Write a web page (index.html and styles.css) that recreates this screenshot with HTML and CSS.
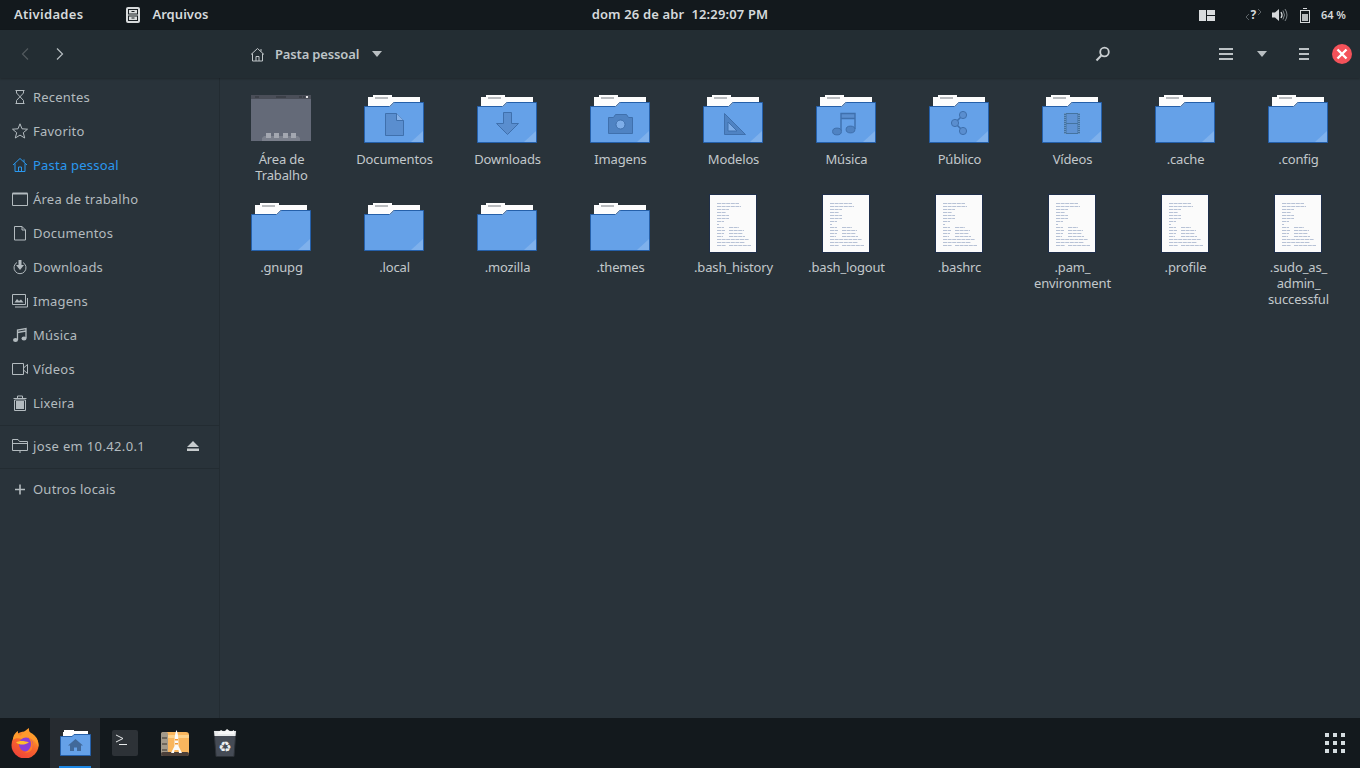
FILE: index.html
```html
<!DOCTYPE html>
<html lang="pt-BR">
<head>
<meta charset="utf-8">
<title>Arquivos</title>
<link rel="stylesheet" href="styles.css">
</head>
<body>
<svg class="defs" width="0" height="0" aria-hidden="true">
  <defs>
    <linearGradient id="fx-body" x1="0.8" y1="0" x2="0.2" y2="1">
      <stop offset="0" stop-color="#ffb02e"/>
      <stop offset=".45" stop-color="#f9672c"/>
      <stop offset="1" stop-color="#ee3f3a"/>
    </linearGradient>
    <symbol id="folder" viewBox="0 0 64 64">
      <g transform="translate(2 11)">
        <path d="M9 0H28V2H56V8H30L26 12H4V2H9Z" fill="#fdfdfd"/>
        <path d="M11 2H24V4H11Z" fill="#b9bcbf"/>
        <path d="M.5 11.500H25.500L29.500 7.500H59.500V47.500H.5Z" fill="#65a1e8" stroke="#2560aa"/>
        <path d="M59 36V47H47Z" fill="#7fb1ec"/>
        <path d="M30 7.500L26 11.500" stroke="#8a9aad" fill="none"/>
      </g>
    </symbol>
    <symbol id="em-doc" viewBox="0 0 64 64">
      <path d="M23.500 29.500H34.500L41.500 36.500V51.500H23.500Z" fill="#5a8ecf" stroke="#3f70ad"/>
      <path d="M34.500 29.500V36.500H41.500" fill="#86b2ea" stroke="#3f70ad"/>
    </symbol>
    <symbol id="em-down" viewBox="0 0 64 64">
      <path d="M28.500 28.500H36.500V39.500H43.500L32.500 50.500L21.500 39.500H28.500Z" fill="#5a8ecf" stroke="#3f70ad"/>
    </symbol>
    <symbol id="em-cam" viewBox="0 0 64 64">
      <path d="M20.500 33.500H25.500L27.500 30.500H38.500L40.500 33.500H44.500V49.500H20.500Z" fill="#4f83c3" stroke="#3f70ad"/>
      <circle cx="32.500" cy="40.500" r="4.500" fill="#7eaee9" stroke="#3f70ad"/>
    </symbol>
    <symbol id="em-tri" viewBox="0 0 64 64">
      <path d="M23.500 29.500V50.500H44.500Z" fill="#4f83c3" stroke="#3f70ad"/>
      <path d="M27 38V47H36Z" fill="#7eaee9" stroke="#3f70ad"/>
    </symbol>
    <symbol id="em-music" viewBox="0 0 64 64">
      <rect x="27" y="29.500" width="14" height="5" fill="#5a8ecf"/>
      <path d="M27 47V29.500H41V45M27 34.500H41" fill="none" stroke="#3f70ad" stroke-width="1.400"/>
      <ellipse cx="23" cy="47.500" rx="4.400" ry="3.400" fill="#4f83c3" stroke="#3f70ad"/>
      <ellipse cx="36.500" cy="45.500" rx="4.400" ry="3.400" fill="#4f83c3" stroke="#3f70ad"/>
    </symbol>
    <symbol id="em-share" viewBox="0 0 64 64">
      <path d="M36 31L28 39L36 47" fill="none" stroke="#3f70ad" stroke-width="1.500"/>
      <circle cx="36" cy="31" r="3.600" fill="#5a8ecf" stroke="#3f70ad"/>
      <circle cx="28" cy="39" r="3.600" fill="#5a8ecf" stroke="#3f70ad"/>
      <circle cx="36" cy="47" r="3.600" fill="#5a8ecf" stroke="#3f70ad"/>
    </symbol>
    <symbol id="em-film" viewBox="0 0 64 64">
      <rect x="24" y="29" width="16" height="21" fill="#44739f"/>
      <rect x="26.500" y="30" width="11" height="9" fill="#5f93d4"/>
      <rect x="26.500" y="40" width="11" height="9" fill="#5f93d4"/>
      <path d="M25 29V50M39 29V50" stroke="#88b3ea" stroke-dasharray="1 1"/>
    </symbol>
    <symbol id="desktop" viewBox="0 0 64 64">
      <g transform="translate(2 11)">
        <rect x="0" y="0" width="60" height="46" fill="#646a78"/>
        <rect x="0" y="0" width="60" height="4" fill="#4a4e58"/>
        <rect x="4" y="1.500" width="4" height="1" fill="#2f3238"/>
        <rect x="25" y="1.500" width="10" height="1" fill="#2f3238"/>
        <rect x="48" y="1.500" width="3" height="1" fill="#2f3238"/>
        <rect x="52" y="1.500" width="2" height="1" fill="#2f3238"/>
        <rect x="55" y="1" width="2" height="2" fill="#e8e8e8"/>
        <path d="M11 46V43L13 41H47L49 43V46Z" fill="#7b808c"/>
        <rect x="15" y="38" width="5" height="5" fill="#a3a7b0"/>
        <rect x="23" y="38" width="5" height="5" fill="#a3a7b0"/>
        <rect x="32" y="38" width="5" height="5" fill="#a3a7b0"/>
        <rect x="40" y="38" width="5" height="5" fill="#a3a7b0"/>
      </g>
    </symbol>
    <symbol id="doc" viewBox="0 0 64 64">
      <g transform="translate(8 2)">
        <rect x=".5" y=".5" width="47" height="58" fill="#fbfbfb" stroke="#1f2f4a"/>
        <path d="M8 9.500H30M8 12.500H32M8 15.500H20M8 18.500H17M8 21.500H20M8 24.500H20M8 27.500H15M8 30.500H10M8 33.500H15M20 33.500H30M8 36.500H16M20 36.500H35M8 39.500H15M20 39.500H34M8 42.500H14M20 42.500H36M8 45.500H40M8 48.500H36M8 51.500H17M20 51.500H42" stroke="#b7c2d6" stroke-dasharray="4 .6" fill="none"/>
      </g>
    </symbol>
  </defs>
</svg>

<div class="screen">
  <header class="topbar">
    <div class="top-left">
      <span class="top-item">Atividades</span>
      <span class="app-menu">
        <svg class="app-icon" width="14" height="16" viewBox="0 0 14 16"><rect width="14" height="16" rx="2" fill="#d7dadb"/><rect x="2.500" y="2.500" width="9" height="4.500" fill="none" stroke="#171d21"/><rect x="2.500" y="9" width="9" height="4.500" fill="none" stroke="#171d21"/><path d="M5.500 4.500H8.500M5.500 11H8.500" stroke="#171d21"/></svg>
        <span class="top-item app-name">Arquivos</span>
      </span>
    </div>
    <div class="clock">dom 26 de abr&nbsp;&nbsp;12:29:07 PM</div>
    <div class="top-right">
      <svg class="tray-layout" width="16" height="11" viewBox="0 0 16 11"><path d="M0 0H7V11H0ZM8 0H16V5H8ZM8 6H16V11H8Z" fill="#d9dcde"/></svg>
      <svg class="tray-net" width="17" height="16" viewBox="0 0 17 16"><path d="M1 10L4 7M1 10L4 13M16 5L13 2M16 5L13 8" stroke="#5b6266" fill="none"/><text x="8.500" y="12" text-anchor="middle" class="tray-q">?</text></svg>
      <svg class="tray-vol" width="16" height="14" viewBox="0 0 16 14"><path d="M0 4.500H3L7 1V13L3 9.500H0Z" fill="#d5d8da"/><path d="M9 4Q11 7 9 10" stroke="#d5d8da" fill="none" stroke-width="1.300"/><path d="M11 2.500Q14 7 11 11.500M13 1Q17 7 13 13" stroke="#7d8488" fill="none"/></svg>
      <svg class="tray-bat" width="10" height="15" viewBox="0 0 10 15"><path d="M3 .5H7" stroke="#d5d8da"/><rect x=".5" y="2.500" width="9" height="12" fill="none" stroke="#d5d8da"/><rect x="2" y="6" width="6" height="7" fill="#b6babc"/></svg>
      <span class="battery">64 %</span>
    </div>
  </header>

  <div class="toolbar">
    <div class="nav-btn"><svg width="10" height="12" viewBox="0 0 10 12"><path d="M8 .5L2.500 6L8 11.500" fill="none" stroke="#52595e" stroke-width="1.200"/></svg></div>
    <div class="nav-btn"><svg width="10" height="12" viewBox="0 0 10 12"><path d="M2 .5L7.500 6L2 11.500" fill="none" stroke="#b6bdc1" stroke-width="1.200"/></svg></div>
    <div class="crumb">
      <svg width="15" height="15" viewBox="0 0 15 15"><path d="M1 7.500L7.500 1.500L14 7.500M2.500 6.500V14H12.500V6.500M6 14V9.500H9V14M11 2V4.500" fill="none" stroke="#c0c6c9"/></svg>
      <span class="crumb-label">Pasta pessoal</span>
      <span class="arrow-down crumb-arrow"></span>
    </div>
    <svg class="search" width="16" height="16" viewBox="0 0 16 16"><circle cx="9.500" cy="6" r="4.300" fill="none" stroke="#c8cdd0" stroke-width="1.800"/><path d="M6.300 9.500L1.500 14.500" stroke="#c8cdd0" stroke-width="2"/></svg>
    <div class="bars bars-wide"><i></i><i></i><i></i></div>
    <span class="arrow-down view-arrow"></span>
    <div class="bars bars-narrow"><i></i><i></i><i></i></div>
    <svg class="close" width="20" height="20" viewBox="0 0 20 20"><circle cx="10" cy="10" r="10" fill="#f4525a"/><path d="M5.500 5.500L14.500 14.500M14.500 5.500L5.500 14.500" stroke="#fff" stroke-width="2.400"/></svg>
  </div>

  <div class="body">
    <nav class="sidebar">
      <ul class="places">
        <li class="place"><svg viewBox="0 0 16 16"><path d="M3.500 1.500H12.500M3.500 14.500H12.500M4.500 1.500V4L11.500 11.500V14.500M11.500 1.500V4L4.500 11.500V14.500" fill="none"/></svg>Recentes</li>
        <li class="place"><svg viewBox="0 0 16 16"><path d="M8 .8L10 5.800L15.500 6.200L11.300 9.700L12.700 15L8 12.100L3.300 15L4.700 9.700L.5 6.200L6 5.800Z" fill="none"/></svg>Favorito</li>
        <li class="place is-active"><svg viewBox="0 0 16 16"><path d="M1 8L8 1.500L15 8M3 6.500V14.500H13V6.500M6.500 14.500V10H9.500V14.500M12 2.500V5" fill="none"/></svg>Pasta pessoal</li>
        <li class="place"><svg viewBox="0 0 16 16"><path d="M.5 2.500H15.500V14.500H.5Z" fill="none"/><path d="M.5 2.500H15.500" stroke-width="2"/></svg>Área de trabalho</li>
        <li class="place"><svg viewBox="0 0 16 16"><path d="M2.500 1.500H10L13.500 5V15H2.500ZM10 1.500V5H13.500" fill="none"/></svg>Documentos</li>
        <li class="place"><svg viewBox="0 0 16 16"><path d="M5 3.500A6 6 0 1 0 11 3.500" fill="none"/><path d="M6.500 1H9.500V6H12L8 11L4 6H6.500Z" class="solid"/></svg>Downloads</li>
        <li class="place"><svg viewBox="0 0 16 16"><path d="M.5 1.500H13.500V11.500H.5ZM15.500 5V14H3" fill="none"/><path d="M2.500 9.500L5 6L7 8L9 6.500L11.500 9.500Z" class="solid"/></svg>Imagens</li>
        <li class="place"><svg viewBox="0 0 16 16"><path d="M5.500 13V3L14 1.500V11M5.500 5.500L14 4" fill="none" stroke-width="1.300"/><ellipse cx="3.500" cy="13" rx="2.500" ry="2" class="solid"/><ellipse cx="12" cy="11.500" rx="2.500" ry="2" class="solid"/></svg>Música</li>
        <li class="place"><svg viewBox="0 0 16 16"><path d="M.5 2.500H11.500V13.500H.5ZM11.500 7L15.500 3.500V12.500L11.500 9" fill="none"/></svg>Vídeos</li>
        <li class="place"><svg viewBox="0 0 16 16"><path d="M1.500 3.500H14.500M5.500 3V1H10.500V3M2.500 5V15.500H13.500V5Z" fill="none"/><rect x="4" y="6" width="8" height="8" class="solid"/></svg>Lixeira</li>
      </ul>
      <div class="device">
        <svg viewBox="0 0 16 16"><path d="M.5 1.500H6L7.500 3.500H15.500V12.500H.5ZM.5 5.500H15.500M8 12.500V15" fill="none"/></svg>
        <span class="device-name">jose em 10.42.0.1</span>
        <svg class="eject" viewBox="0 0 12 10"><path d="M6 0L12 6H0ZM0 7.500H12V10H0Z" fill="#c7ccce"/></svg>
      </div>
      <div class="other">
        <svg viewBox="0 0 16 16"><path d="M3 8.500H13M8 3.500V13.500" fill="none" stroke-width="1.600"/></svg>Outros locais
      </div>
    </nav>

    <main class="files">
      <div class="file"><svg class="file-icon"><use href="#desktop"/></svg><span class="file-label">Área de<br>Trabalho</span></div>
      <div class="file"><svg class="file-icon"><use href="#folder"/><use href="#em-doc"/></svg><span class="file-label">Documentos</span></div>
      <div class="file"><svg class="file-icon"><use href="#folder"/><use href="#em-down"/></svg><span class="file-label">Downloads</span></div>
      <div class="file"><svg class="file-icon"><use href="#folder"/><use href="#em-cam"/></svg><span class="file-label">Imagens</span></div>
      <div class="file"><svg class="file-icon"><use href="#folder"/><use href="#em-tri"/></svg><span class="file-label">Modelos</span></div>
      <div class="file"><svg class="file-icon"><use href="#folder"/><use href="#em-music"/></svg><span class="file-label">Música</span></div>
      <div class="file"><svg class="file-icon"><use href="#folder"/><use href="#em-share"/></svg><span class="file-label">Público</span></div>
      <div class="file"><svg class="file-icon"><use href="#folder"/><use href="#em-film"/></svg><span class="file-label">Vídeos</span></div>
      <div class="file"><svg class="file-icon"><use href="#folder"/></svg><span class="file-label">.cache</span></div>
      <div class="file"><svg class="file-icon"><use href="#folder"/></svg><span class="file-label">.config</span></div>
      <div class="file"><svg class="file-icon"><use href="#folder"/></svg><span class="file-label">.gnupg</span></div>
      <div class="file"><svg class="file-icon"><use href="#folder"/></svg><span class="file-label">.local</span></div>
      <div class="file"><svg class="file-icon"><use href="#folder"/></svg><span class="file-label">.mozilla</span></div>
      <div class="file"><svg class="file-icon"><use href="#folder"/></svg><span class="file-label">.themes</span></div>
      <div class="file"><svg class="file-icon"><use href="#doc"/></svg><span class="file-label">.bash_history</span></div>
      <div class="file"><svg class="file-icon"><use href="#doc"/></svg><span class="file-label">.bash_logout</span></div>
      <div class="file"><svg class="file-icon"><use href="#doc"/></svg><span class="file-label">.bashrc</span></div>
      <div class="file"><svg class="file-icon"><use href="#doc"/></svg><span class="file-label">.pam_<br>environment</span></div>
      <div class="file"><svg class="file-icon"><use href="#doc"/></svg><span class="file-label">.profile</span></div>
      <div class="file"><svg class="file-icon"><use href="#doc"/></svg><span class="file-label">.sudo_as_<br>admin_<br>successful</span></div>
    </main>
  </div>

  <footer class="dock">
    <div class="dock-item">
      <svg width="30" height="30" viewBox="0 0 30 30">
        <circle cx="15" cy="17" r="13.500" fill="url(#fx-body)"/>
        <path d="M3 10C4 6 6 4 8 3C7.500 6 9 7.500 11 7.500C13 4 17 1.500 19 0C18.500 3 20 5 23 7C27 10 29 14 28.500 19C25 11 18 8 12 11C8.500 10 5 10 3 12Z" fill="#ff9a2c"/>
        <circle cx="16" cy="16.500" r="7" fill="#8a3fd8"/>
        <path d="M6 14.500C9 12.500 14 12.500 19 14.500C15 17 10 17.500 6 14.500Z" fill="#ffbf2f"/>
        <path d="M17 8.500C22 10.500 24.500 15.500 22 21C20.500 24 17 25 14 24.500C18 23.500 21 20 21 16C21 13 19.500 10.500 17 8.500Z" fill="#ff7b2a"/>
      </svg>
    </div>
    <div class="dock-item is-running">
      <svg width="31" height="26" viewBox="0 0 31 26">
        <path d="M4 0H14V1H28V6H3V2H4Z" fill="#fff"/>
        <path d="M.5 6.500H12L14 4.500H30.500V25.500H.5Z" fill="#65a1e8" stroke="#2560aa"/>
        <path d="M8 15.500L15.500 9L23 15.500H21V21H17V17.500H14V21H10V15.500Z" fill="#41699a"/>
      </svg>
    </div>
    <div class="dock-item">
      <svg width="26" height="26" viewBox="0 0 26 26">
        <rect width="26" height="26" rx="2" fill="#2d3237"/>
        <path d="M4 5L11 8.500L4 12" fill="none" stroke="#e8eaeb" stroke-width="1"/>
        <path d="M7 14.500H15" stroke="#e8eaeb" stroke-width="1"/>
      </svg>
    </div>
    <div class="dock-item">
      <svg width="28" height="27" viewBox="0 0 28 27">
        <rect y="2" width="28" height="24" rx="3" fill="#f9b65e"/>
        <rect y="2" width="7" height="24" rx="2" fill="#a39a8b"/>
        <path d="M1 8H6M1 14H6M1 20H6" stroke="#6d665c" stroke-width="2"/>
        <rect x="7" y="5" width="21" height="3" fill="#fdd28c"/>
        <rect y="22" width="28" height="4" rx="2" fill="#4b3f39"/>
        <path d="M15.500 0C14 3 13.500 8 13.500 16L10 23H13L13.500 20H17.500L18 23H21L17.500 16C17.500 8 17 3 15.500 0Z" fill="#fafafa"/>
        <rect x="14" y="9" width="3" height="1.500" fill="#ef9a3a"/>
        <rect x="14" y="13" width="3" height="1.500" fill="#ef9a3a"/>
      </svg>
    </div>
    <div class="dock-item">
      <svg width="24" height="28" viewBox="0 0 24 28">
        <path d="M1 2H23L21 27.500H3Z" fill="#454b55" stroke="#2b3036"/>
        <path d="M1 2H23L22.500 7H1.500Z" fill="#e9ebec"/>
        <path d="M5 4L8 1L11 3L14 0L18 3L21 1V5H5Z" fill="#f8f8f8"/>
        <text x="12" y="22.500" text-anchor="middle" class="recycle">♻</text>
      </svg>
    </div>
    <div class="apps-grid">
      <i></i><i></i><i></i><i></i><i></i><i></i><i></i><i></i><i></i>
    </div>
  </footer>
</div>
</body>
</html>
```

FILE: styles.css
```css
* { box-sizing: border-box; }
html, body { margin: 0; padding: 0; }
body {
  font-family: "Noto Sans", "Open Sans", sans-serif;
  font-size: 13px;
  background: #29333a;
  overflow: hidden;
}
.defs { position: absolute; }
.screen {
  width: 1360px;
  height: 768px;
  display: flex;
  flex-direction: column;
}

/* Top bar */
.topbar {
  height: 30px;
  flex: none;
  background: #13191d;
  color: #d6dadc;
  display: grid;
  grid-template-columns: 1fr auto 1fr;
  align-items: center;
  font-weight: 600;
  letter-spacing: .3px;
}
.top-left { display: flex; align-items: center; padding-left: 14px; }
.top-item, .clock, .battery { padding-bottom: 2px; }
.app-menu { display: flex; align-items: center; margin-left: 43px; }
.app-icon { margin-right: 12px; }
.app-name { letter-spacing: .05px; }
.clock { letter-spacing: .15px; }
.top-right {
  display: flex;
  align-items: center;
  justify-content: flex-end;
  padding-right: 14px;
}
.tray-layout { margin-right: 30px; }
.tray-net { margin-right: 10px; }
.tray-q { font-size: 12px; font-weight: 700; fill: #d5d8da; }
.tray-vol { margin-right: 12px; }
.tray-bat { margin-right: 11px; }
.battery { font-size: 11px; letter-spacing: 0; }

/* Toolbar */
.toolbar {
  height: 48px;
  flex: none;
  background: #232d33;
  box-shadow: 0 1px 2px rgba(0, 0, 0, .25);
  display: flex;
  align-items: center;
  padding: 0 8px 0 7px;
  position: relative;
}
.nav-btn { width: 35px; display: flex; justify-content: center; }
.crumb { display: flex; align-items: center; margin-left: 173px; }
.crumb-label {
  margin-left: 10px;
  font-weight: 600;
  color: #bfc5c8;
  letter-spacing: -.15px;
}
.arrow-down {
  display: block;
  width: 0;
  height: 0;
  border-left: 5.5px solid transparent;
  border-right: 5.5px solid transparent;
  border-top: 6px solid #b9bfc2;
}
.crumb-arrow { margin-left: 13px; }
.search { margin-left: auto; margin-right: 108px; }
.bars { display: flex; flex-direction: column; gap: 3px; }
.bars i { display: block; height: 2px; background: #bcc2c5; }
.bars-wide { width: 14px; margin-right: 24px; }
.view-arrow { margin-right: 32px; }
.bars-narrow { width: 10px; margin-right: 23px; }
.close { display: block; }

/* Body */
.body { flex: 1; display: flex; min-height: 0; }
.sidebar {
  width: 220px;
  flex: none;
  border-right: 1px solid #232c32;
  padding-top: 2px;
  color: #b3bbbf;
  letter-spacing: .22px;
}
.places { list-style: none; margin: 0; padding: 0 0 5px; border-bottom: 1px solid #232c32; }
.place, .device, .other {
  display: flex;
  align-items: center;
  padding-left: 12px;
}
.place { height: 34px; }
.sidebar svg {
  width: 16px;
  height: 16px;
  margin-right: 5px;
  flex: none;
  stroke: #b3bbbf;
}
.sidebar svg .solid { fill: #b3bbbf; stroke: none; }
.is-active { color: #2a98ee; }
.sidebar .is-active svg { stroke: #2a98ee; }
.device { height: 43px; border-bottom: 1px solid #232c32; padding: 0 20px 2px 12px; }
.device-name { flex: 1; letter-spacing: .35px; }
.sidebar .eject { width: 12px; height: 10px; margin: 0; stroke: none; }
.other { height: 41px; padding-bottom: 2px; }

/* Files */
.files {
  flex: 1;
  padding: 6px 0 0 4.5px;
  display: grid;
  grid-template-columns: repeat(10, 113px);
  grid-auto-rows: max-content;
  row-gap: 9px;
  align-content: start;
}
.file { display: flex; flex-direction: column; align-items: center; min-height: 99px; }
.file-icon { width: 64px; height: 64px; display: block; flex: none; }
.file-label {
  margin-top: 3px;
  padding-left: 1px;
  line-height: 16px;
  color: #c2c8cb;
  text-align: center;
  letter-spacing: -.15px;
  white-space: nowrap;
}

/* Dock */
.dock {
  height: 50px;
  flex: none;
  background: #13191d;
  display: flex;
  align-items: stretch;
}
.dock-item {
  width: 50px;
  display: flex;
  align-items: center;
  justify-content: center;
  position: relative;
}
.is-running { background: #262b30; }
.is-running::after {
  content: "";
  position: absolute;
  left: 9px;
  right: 9px;
  bottom: 0;
  height: 2px;
  background: #1e88e5;
}
.recycle { font-family: "DejaVu Sans", sans-serif; font-size: 15px; fill: #eceeef; }
.apps-grid {
  margin-left: auto;
  margin-right: 15px;
  align-self: center;
  display: grid;
  grid-template-columns: repeat(3, 4px);
  grid-auto-rows: 4px;
  gap: 4px;
}
.apps-grid i { background: #d5dde0; display: block; }
```
